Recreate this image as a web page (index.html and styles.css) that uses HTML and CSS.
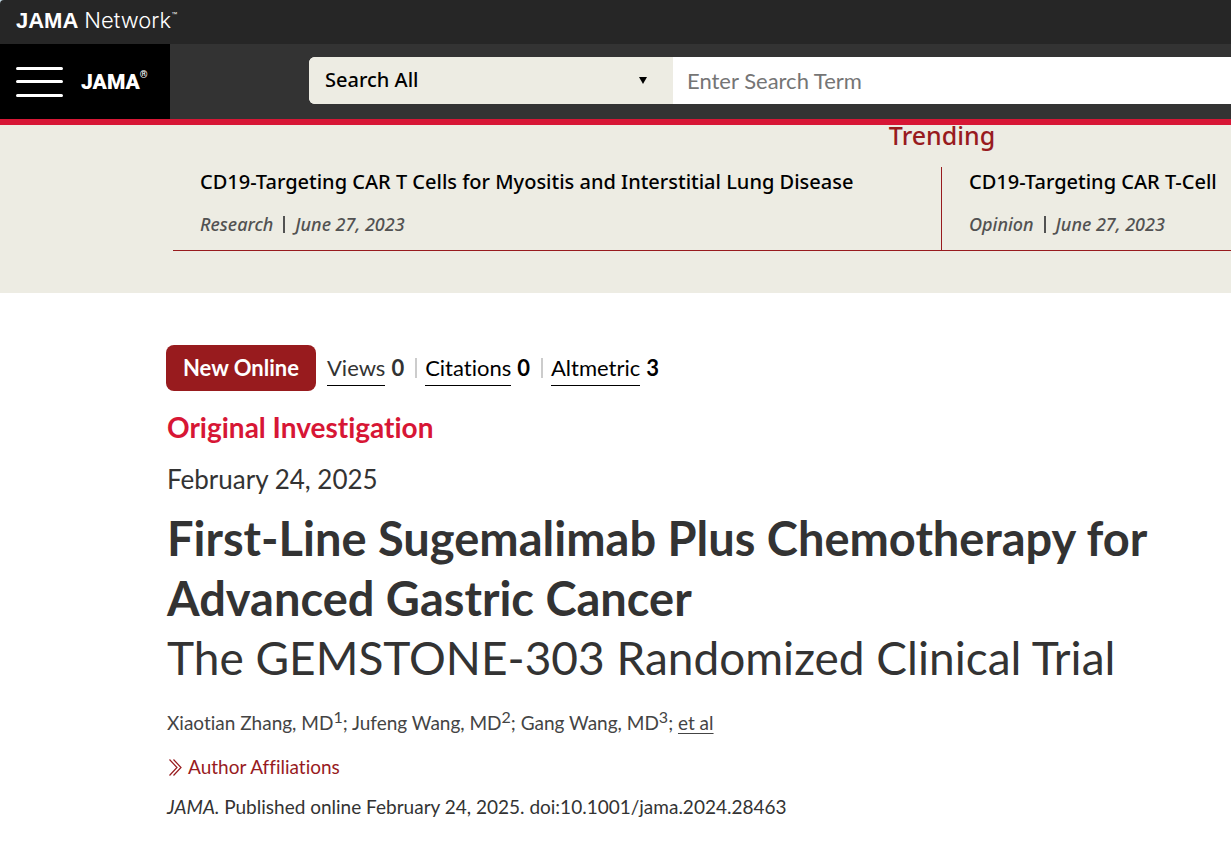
FILE: index.html
```html
<!DOCTYPE html>
<html lang="en">
<head>
<meta charset="utf-8">
<title>First-Line Sugemalimab Plus Chemotherapy for Advanced Gastric Cancer</title>
<link rel="stylesheet" href="styles.css">
</head>
<body>
<header class="site-header">
  <div class="network-bar">
    <a class="network-logo" href="#"><b>JAMA</b><span>Network</span><small>™</small></a>
  </div>
  <div class="nav-bar">
    <div class="brand">
      <button class="menu-button" type="button" aria-label="Menu">
        <svg width="47" height="31" viewBox="0 0 47 31" stroke="#fff" stroke-width="3" stroke-linecap="round" aria-hidden="true"><path d="M1.500 1.500H45.500M1.500 14.500H45.500M1.500 28.500H45.500"/></svg>
      </button>
      <a class="journal-logo" href="#">JAMA<small>®</small></a>
    </div>
    <form class="search">
      <div class="search-scope">
        <select aria-label="Search scope"><option>Search All</option></select>
        <svg width="8" height="7" viewBox="0 0 8 7" aria-hidden="true"><path d="M0 0H8L4 7Z"/></svg>
      </div>
      <input class="search-term" type="text" placeholder="Enter Search Term" aria-label="Enter Search Term">
    </form>
  </div>
</header>

<section class="trending">
  <div class="trending-track">
    <h2 class="trending-title">Trending</h2>
    <div class="trending-list">
      <article class="trending-item">
        <a class="trending-link" href="#">CD19-Targeting CAR T Cells for Myositis and Interstitial Lung Disease</a>
        <p class="trending-meta"><span>Research</span><i></i><span>June 27, 2023</span></p>
      </article>
      <article class="trending-item">
        <a class="trending-link" href="#">CD19-Targeting CAR T-Cell</a>
        <p class="trending-meta"><span>Opinion</span><i></i><span>June 27, 2023</span></p>
      </article>
    </div>
  </div>
</section>

<main class="article">
  <div class="metrics">
    <span class="badge">New Online</span>
    <div class="metric views"><a href="#">Views</a> <b>0</b></div>
    <div class="metric"><a href="#">Citations</a> <b>0</b></div>
    <div class="metric"><a href="#">Altmetric</a> <b>3</b></div>
  </div>
  <p class="article-type">Original Investigation</p>
  <p class="article-date">February 24, 2025</p>
  <h1 class="article-title">First-Line Sugemalimab Plus Chemotherapy for Advanced Gastric Cancer <span>The GEMSTONE-303 Randomized Clinical Trial</span></h1>
  <p class="authors">Xiaotian Zhang, MD<sup>1</sup>; Jufeng Wang, MD<sup>2</sup>; Gang Wang, MD<sup>3</sup>; <a href="#">et al</a></p>
  <a class="affiliations" href="#">
    <svg width="13" height="17" viewBox="0 0 13 17" fill="none" stroke="#981b1e" stroke-width="1.200" aria-hidden="true"><path d="M.5.500 8 8.500.500 16.500M4.500.500 12 8.500 4.500 16.500"/></svg>
    <span>Author Affiliations</span>
  </a>
  <p class="citation"><em>JAMA.</em> Published online February 24, 2025. doi:10.1001/jama.2024.28463</p>
</main>
</body>
</html>
```
FILE: styles.css
```css
* { box-sizing: border-box; }

body {
  margin: 0;
  background: #fff;
  color: #333;
  font-family: Lato, "Open Sans", sans-serif;
  font-variant-ligatures: none;
}

h1, h2, p { margin: 0; }
a { color: inherit; text-decoration: none; }

/* Header */
.site-header {
  background: #c3d8e2;
  border-bottom: 6px solid #d71635;
}

.network-bar {
  display: flex;
  align-items: center;
  height: 44px;
  padding: 0 16px 3px;
  border-top-left-radius: 4px;
  background: #262626;
}

.network-logo {
  display: flex;
  align-items: baseline;
  gap: 6px;
  color: #fff;
  font: 22px/24px "Liberation Sans", Arial, sans-serif;
}
.network-logo span { font-family: Inter, sans-serif; font-size: 22px; font-weight: 300; }
.network-logo small { align-self: flex-start; margin-left: -6px; font-size: 6px; line-height: 12px; }

.nav-bar {
  display: flex;
  align-items: stretch;
  height: 75px;
  background: #333;
}

.brand {
  display: flex;
  flex: none;
  align-items: center;
  gap: 18px;
  width: 170px;
  padding-left: 16px;
  background: #000;
}

.menu-button {
  display: flex;
  padding: 2px 0 0;
  border: 0;
  background: none;
}

.journal-logo {
  display: flex;
  color: #fff;
  font: 900 21px/26px Roboto, sans-serif;
}
.journal-logo small { font-size: 10px; font-weight: 700; line-height: 12px; }

.search {
  display: flex;
  flex: 1;
  height: 47px;
  margin: 13px 0 0 139px;
  overflow: hidden;
  border-radius: 6px 0 0 6px;
  background: #fff;
}

.search-scope {
  display: flex;
  flex: 0 0 364px;
  align-items: center;
  padding-right: 26px;
  background: #edece3;
}

.search-scope select {
  flex: 1;
  height: 47px;
  padding: 0 0 2px 16px;
  border: 0;
  background: transparent;
  color: #000;
  font: 500 20px "Noto Sans", sans-serif;
  appearance: none;
}

.search-term {
  flex: 1;
  min-width: 0;
  padding: 0 14px;
  border: 0;
  color: #333;
  font: 22px Lato, sans-serif;
}
.search-term::placeholder { color: #757575; }

/* Trending */
.trending {
  padding: 0 0 42px 173px;
  overflow-x: clip;
  background: #edece3;
  font-family: "Noto Sans", sans-serif;
  font-weight: 500;
}

.trending-track { width: max-content; }

.trending-title {
  padding-bottom: 22px;
  color: #981b1e;
  font-size: 25px;
  font-weight: 500;
  line-height: 20px;
  text-align: center;
}

.trending-list {
  display: flex;
  border-bottom: 1px solid #981b1e;
}

.trending-item {
  flex: none;
  width: 769px;
  padding: 0 27px 12px;
  border-right: 1px solid #981b1e;
}

.trending-link {
  display: block;
  color: #000;
  font-size: 20px;
  line-height: 30px;
}

.trending-meta {
  display: flex;
  align-items: center;
  gap: 10px;
  padding-top: 13px;
  color: #525252;
  font-size: 18px;
  font-style: italic;
  line-height: 28px;
}
.trending-meta i { width: 2px; height: 17px; background: #525252; }

/* Article */
.article { padding: 52px 40px 28px 167px; }

.metrics {
  display: flex;
  align-items: center;
  margin-left: -1px;
  color: #000;
  font-size: 22px;
  line-height: 28px;
}

.badge {
  margin-right: 11px;
  padding: 9px 17px;
  border-radius: 8px;
  background: #981b1e;
  color: #fff;
  font-weight: 700;
}

.metric {
  display: flex;
  align-items: center;
  gap: 6px;
}
.metric a { margin-top: 4px; padding-bottom: 3px; border-bottom: 1px solid #000; }
.metric + .metric::before {
  width: 2px;
  height: 20px;
  margin: 0 2px 0 11px;
  background: #ccc;
  content: "";
}
.views { color: #333; }

.article-type {
  padding-top: 18px;
  color: #d71635;
  font-size: 28px;
  font-weight: 700;
  line-height: 36px;
}

.article-date {
  padding: 16px 0 11px;
  font-size: 26px;
  line-height: 36px;
}

.article-title {
  font-size: 47px;
  font-weight: 700;
  line-height: 60px;
}
.article-title span { display: block; font-size: 46px; font-weight: 400; }

.authors {
  padding-top: 21px;
  color: #444;
  font-size: 19px;
  line-height: 28px;
}
.authors sup { font-size: 16px; line-height: 0; }
.authors a { text-decoration: underline; text-underline-offset: 3px; }

.affiliations {
  display: flex;
  align-items: center;
  gap: 6px;
  width: max-content;
  margin: 16px 0 12px 2px;
  color: #981b1e;
  font-size: 19px;
  line-height: 28px;
}

.citation { font-size: 19px; line-height: 28px; }
```
